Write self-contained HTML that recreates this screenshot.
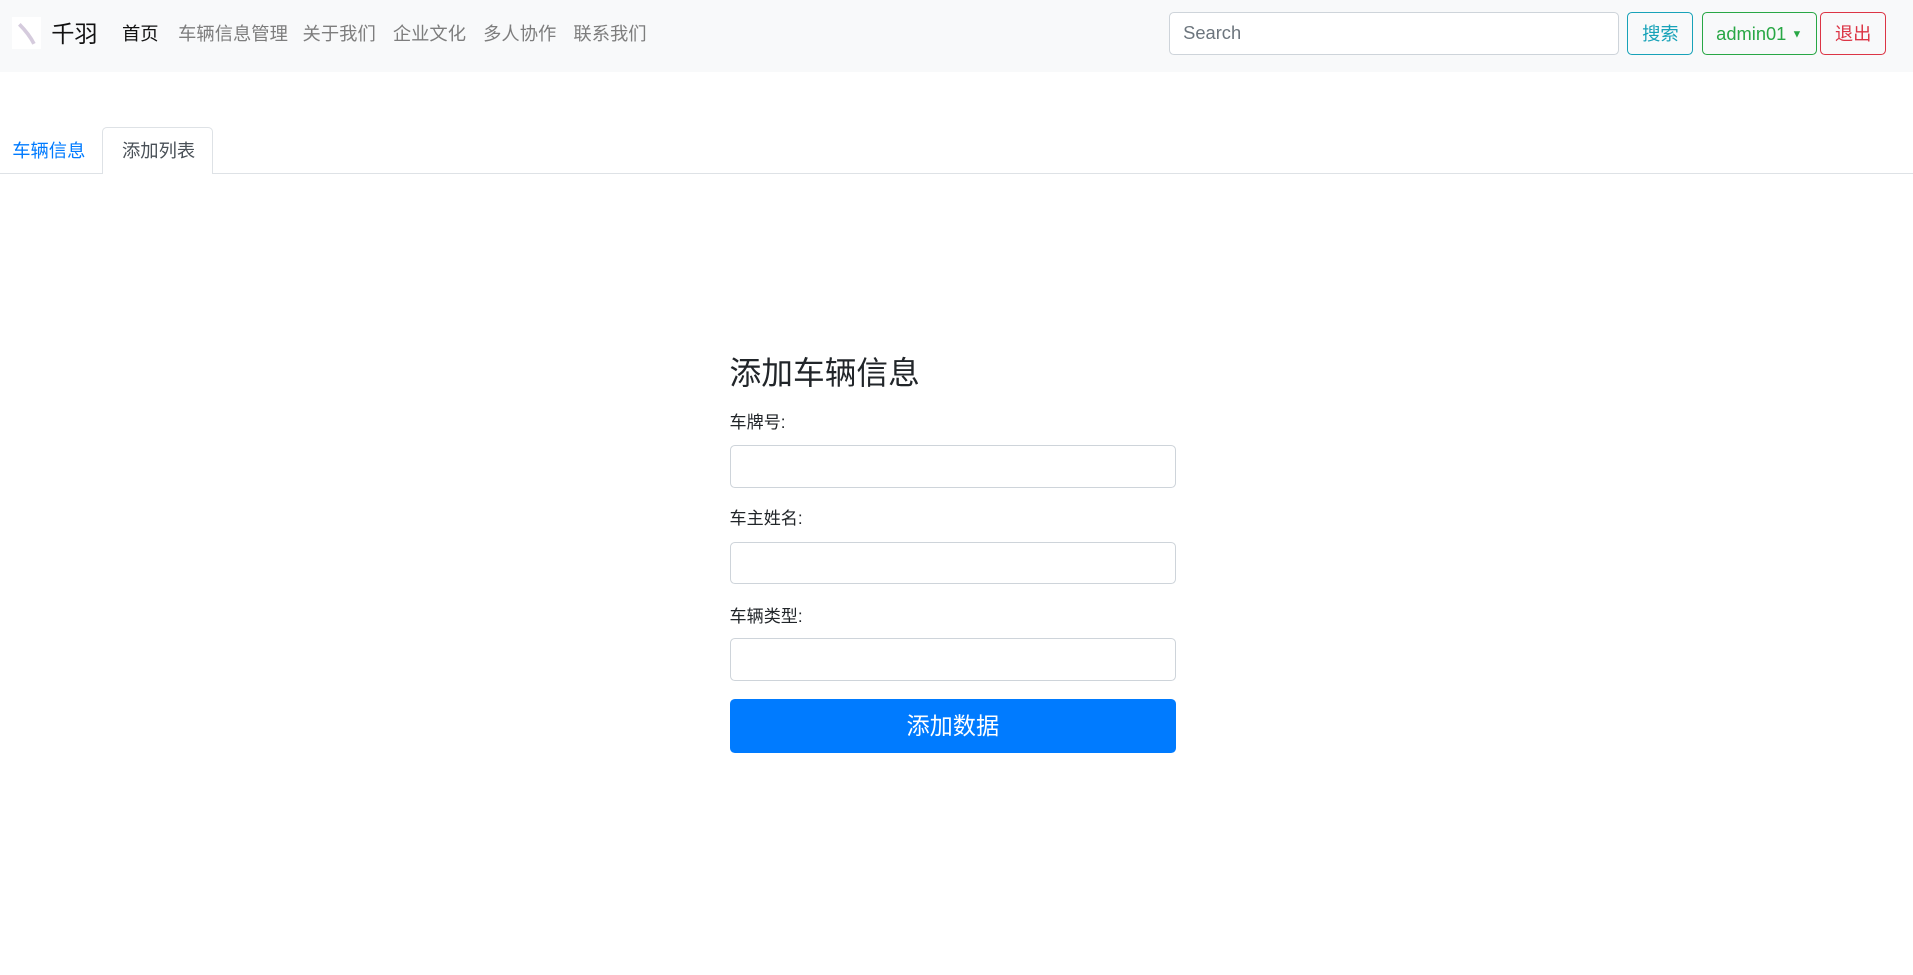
<!DOCTYPE html>
<html><head><meta charset="utf-8"><style>
html,body{margin:0;padding:0}
body{zoom:1.22;width:1568px;height:799px;overflow:hidden;position:relative;background:#fff;font-family:"Liberation Sans","Noto Sans CJK SC",sans-serif;font-size:15px;color:#212529}
.nav{position:absolute;left:0;top:0;width:1568px;height:59px;background:#f8f9fa}
.a{position:absolute;white-space:nowrap}
.inp{position:absolute;box-sizing:border-box;border:1px solid #ced4da;border-radius:4px;background:#fff}
.btn{position:absolute;box-sizing:border-box;border:1px solid;border-radius:4px;text-align:center;line-height:34px;font-size:15px}
</style></head><body>
<div class="nav"></div>
<div class="a" style="left:10px;top:14px;width:24px;height:26px;background:#fff"><svg width="24" height="26"><path d="M6 6 Q14 14 18 22" stroke="#b9a9c6" stroke-width="3" fill="none" opacity=".6"/></svg></div>
<div class="a" style="left:42px;top:14px;font-size:19px;line-height:28px;color:#111">千羽</div>
<div class="a" style="left:100px;top:17px;line-height:22px;color:#111">首页</div>
<div class="a" style="left:146px;top:17px;line-height:22px;color:#7d7d7d">车辆信息管理</div>
<div class="a" style="left:248px;top:17px;line-height:22px;color:#7d7d7d">关于我们</div>
<div class="a" style="left:322px;top:17px;line-height:22px;color:#7d7d7d">企业文化</div>
<div class="a" style="left:396px;top:17px;line-height:22px;color:#7d7d7d">多人协作</div>
<div class="a" style="left:470px;top:17px;line-height:22px;color:#7d7d7d">联系我们</div>
<div class="inp" style="left:958px;top:10px;width:369px;height:35px;padding-left:11px;line-height:33px;color:#6c757d">Search</div>
<div class="btn" style="left:1334px;top:10px;width:54px;height:35px;border-color:#17a2b8;color:#17a2b8">搜索</div>
<div class="btn" style="left:1395px;top:10px;width:94px;height:35px;border-color:#28a745;color:#28a745">admin01 <span style="font-size:9px;vertical-align:2px">▼</span></div>
<div class="btn" style="left:1492px;top:10px;width:54px;height:35px;border-color:#dc3545;color:#dc3545">退出</div>
<div class="a" style="left:0;top:142px;width:1568px;border-top:1px solid #dee2e6"></div>
<div class="a" style="left:84px;top:104px;width:91px;height:39px;box-sizing:border-box;border:1px solid #dee2e6;border-bottom:none;border-radius:4px 4px 0 0;background:#fff"></div>
<div class="a" style="left:10px;top:113px;line-height:22px;color:#007bff">车辆信息</div>
<div class="a" style="left:100px;top:113px;line-height:22px;color:#495057">添加列表</div>
<div class="a" style="left:598px;top:290px;font-size:26px;line-height:32px">添加车辆信息</div>
<div class="a" style="left:598px;top:336px;line-height:22px;font-size:14px">车牌号:</div>
<div class="inp" style="left:598px;top:365px;width:366px;height:35px"></div>
<div class="a" style="left:598px;top:415px;line-height:22px;font-size:14px">车主姓名:</div>
<div class="inp" style="left:598px;top:444px;width:366px;height:35px"></div>
<div class="a" style="left:598px;top:495px;line-height:22px;font-size:14px">车辆类型:</div>
<div class="inp" style="left:598px;top:523px;width:366px;height:35px"></div>
<div class="btn" style="left:598px;top:573px;width:366px;height:44px;background:#007bff;border-color:#007bff;color:#fff;font-size:19px;line-height:44px">添加数据</div>
</body></html>
